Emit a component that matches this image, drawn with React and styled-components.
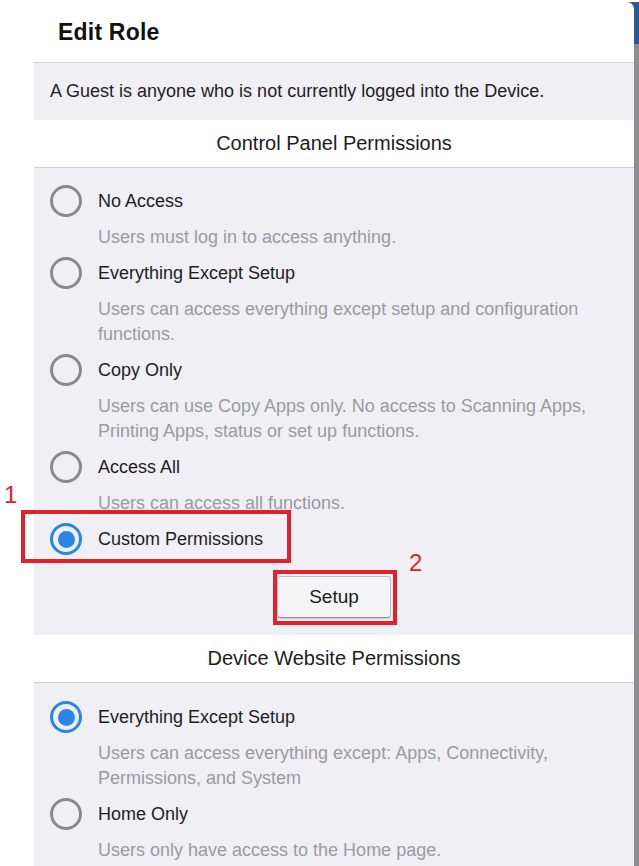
import React from "react";
import styled, { createGlobalStyle } from "styled-components";

const Global = createGlobalStyle`
  html, body { margin: 0; padding: 0; background: #ffffff; }
  body { font-family: "Liberation Sans", Arial, sans-serif; }
  * { box-sizing: border-box; }
`;

const Page = styled.div`
  position: relative;
  z-index: 0;
  width: 639px;
  height: 866px;
  overflow: hidden;
  display: flex;
  padding-top: 2px;
  background: #ffffff;
`;

const Gutter = styled.div`
  width: 34px;
  flex: none;
`;

const Dialog = styled.div`
  width: 600px;
  flex: none;
  display: flex;
  flex-direction: column;
  overflow: hidden;
  background: #ffffff;
  border-top-right-radius: 7px;
  & > * {
    flex-shrink: 0;
  }
`;

const Backdrop = styled.div`
  flex: 1;
  display: flex;
  flex-direction: column;
  margin-left: -6px;
  position: relative;
  z-index: -1;
`;

const BackdropTop = styled.div`
  height: 42px;
  background: #2b5a92;
`;

const BackdropRest = styled.div`
  flex: 1;
  background: #8d8d92;
`;

const Header = styled.div`
  height: 61px;
  display: flex;
  align-items: center;
  padding-left: 24px;
  border-bottom: 1px solid #cfcfd3;
`;

const Title = styled.h1`
  margin: 0;
  font-size: 23px;
  font-weight: 700;
  color: #111;
  letter-spacing: 0.2px;
`;

const Info = styled.div`
  height: 57px;
  display: flex;
  align-items: center;
  padding-left: 16px;
  background: #efeff4;
  font-size: 18px;
  color: #222;
`;

const SectionHeader = styled.div`
  height: 48px;
  display: flex;
  align-items: center;
  justify-content: center;
  background: #ffffff;
  border-bottom: 1px solid #cfcfd3;
  font-size: 20px;
  color: #1c1c1c;
`;

const OptionList = styled.div`
  background: #efeff4;
  padding: ${(p) => p.$top}px 16px 17px 16px;
  display: flex;
  flex-direction: column;
  gap: 7px;
`;

const Option = styled.div`
  display: flex;
  flex-direction: column;
`;

const OptionRow = styled.div`
  display: flex;
  align-items: center;
  height: 32px;
  gap: 16px;
`;

const Radio = styled.span`
  width: 32px;
  height: 32px;
  flex: none;
  border-radius: 50%;
  border: 3.5px solid ${(p) => (p.$checked ? "#2a86e6" : "#8a8a8e")};
  display: flex;
  align-items: center;
  justify-content: center;
  &::after {
    content: "";
    width: 17px;
    height: 17px;
    border-radius: 50%;
    background: ${(p) => (p.$checked ? "#2a86e6" : "transparent")};
  }
`;

const Label = styled.span`
  font-size: 18px;
  color: #1e1e1e;
`;

const Desc = styled.div`
  margin-top: 8px;
  padding-left: 48px;
  font-size: 18px;
  line-height: 25px;
  color: #9b9b9f;
`;

const ButtonRow = styled.div`
  display: flex;
  justify-content: center;
  margin-top: 14px;
`;

const SetupButton = styled.button`
  width: 114px;
  height: 42px;
  font-family: "Liberation Sans", Arial, sans-serif;
  font-size: 19px;
  color: #1b1b1b;
  background: #f4f4f6;
  border: 1px solid #bdbdc2;
  border-bottom-color: #8e8e93;
  border-radius: 4px;
  box-shadow: 0 1px 1px rgba(0, 0, 0, 0.15);
`;

const Mark = styled.div`
  position: absolute;
  border: 4px solid #e0202b;
  left: ${(p) => p.$x}px;
  top: ${(p) => p.$y}px;
  width: ${(p) => p.$w}px;
  height: ${(p) => p.$h}px;
`;

const MarkNumber = styled.span`
  position: absolute;
  left: ${(p) => p.$x}px;
  top: ${(p) => p.$y}px;
  font-family: "Liberation Sans", Arial, sans-serif;
  font-size: 24px;
  line-height: 24px;
  color: #e0202b;
`;

const control = [
  { label: "No Access", desc: ["Users must log in to access anything."] },
  {
    label: "Everything Except Setup",
    desc: ["Users can access everything except setup and configuration", "functions."],
  },
  {
    label: "Copy Only",
    desc: ["Users can use Copy Apps only. No access to Scanning Apps,", "Printing Apps, status or set up functions."],
  },
  { label: "Access All", desc: ["Users can access all functions."] },
  { label: "Custom Permissions", checked: true },
];

const website = [
  {
    label: "Everything Except Setup",
    checked: true,
    desc: ["Users can access everything except: Apps, Connectivity,", "Permissions, and System"],
  },
  { label: "Home Only", desc: ["Users only have access to the Home page."] },
];

function OptionItem({ o }) {
  return (
    <Option>
      <OptionRow>
        <Radio $checked={o.checked} />
        <Label>{o.label}</Label>
      </OptionRow>
      {o.desc && (
        <Desc>
          {o.desc.map((line, i) => (
            <div key={i}>{line}</div>
          ))}
        </Desc>
      )}
    </Option>
  );
}

export default function App() {
  return (
    <>
      <Global />
      <Page>
        <Gutter />
        <Dialog>
          <Header>
            <Title>Edit Role</Title>
          </Header>
          <Info>A Guest is anyone who is not currently logged into the Device.</Info>
          <SectionHeader>Control Panel Permissions</SectionHeader>
          <OptionList $top={17}>
            {control.map((o) => (
              <OptionItem key={o.label} o={o} />
            ))}
            <ButtonRow>
              <SetupButton>Setup</SetupButton>
            </ButtonRow>
          </OptionList>
          <SectionHeader>Device Website Permissions</SectionHeader>
          <OptionList $top={18}>
            {website.map((o) => (
              <OptionItem key={o.label} o={o} />
            ))}
          </OptionList>
        </Dialog>
        <Backdrop>
          <BackdropTop />
          <BackdropRest />
        </Backdrop>
        <Mark $x={21} $y={510} $w={270} $h={53} />
        <Mark $x={273} $y={570} $w={124} $h={55} />
        <MarkNumber $x={4} $y={483}>1</MarkNumber>
        <MarkNumber $x={409} $y={551}>2</MarkNumber>
      </Page>
    </>
  );
}
